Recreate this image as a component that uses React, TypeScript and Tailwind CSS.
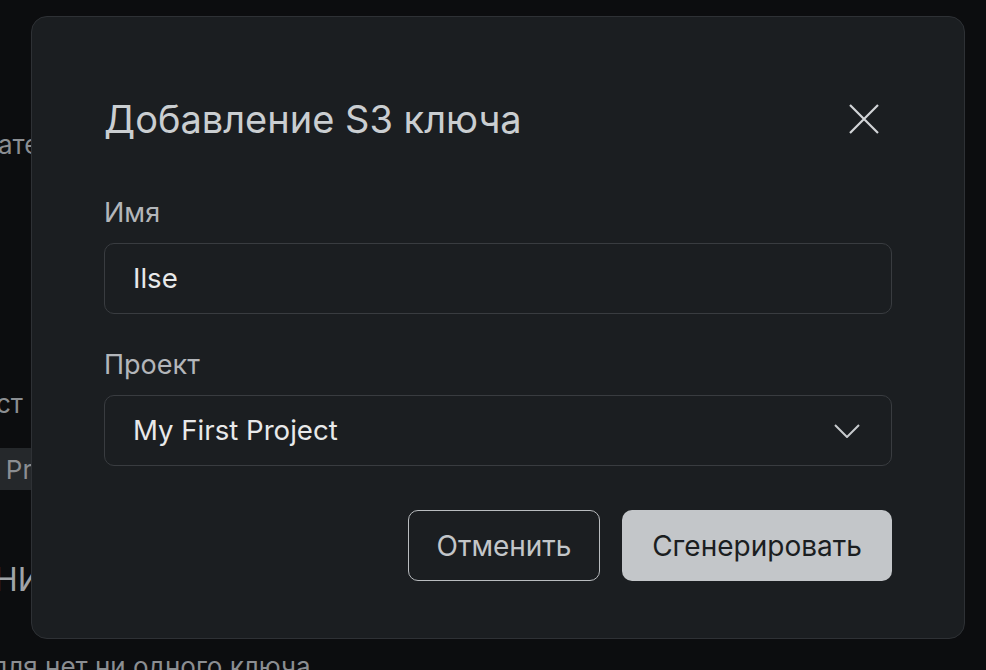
const FONT = { fontFamily: 'Inter, "Noto Sans", sans-serif' };

function Field({ label, children }: { label: string; children: React.ReactNode }) {
  return (
    <div className="flex flex-col">
      <span className="text-[27px] leading-[32px] text-[#b3b6ba]">{label}</span>
      <div className="mt-[14px] flex h-[71px] items-center justify-between rounded-[10px] border border-[#393c40] pl-[28px] pr-[31px] text-[27.6px] text-[#e8e9ea]">
        {children}
      </div>
    </div>
  );
}

export default function App() {
  return (
    <div className="relative h-[670px] w-[986px] overflow-hidden bg-[#0c0d0f]" style={FONT}>
      {/* page behind the dialog */}
      <div className="flex flex-col text-[26px] text-[#8b8e92]">
        <span className="ml-[-2px] mt-[128px] leading-[34px]">ател</span>
        <span className="ml-[-4px] mt-[225px] leading-[34px]">ст</span>
        <span className="mt-[27px] flex h-[42px] w-[60px] items-center bg-[#25282b]">
          <span className="ml-[-10px]">t Pr</span>
        </span>
        <span className="ml-[-6px] mt-[70px] text-[32px] leading-[40px] text-[#a0a3a7]">НИ</span>
        <span className="ml-[-8px] mt-[50px] whitespace-nowrap leading-[34px]">для нет ни одного ключа</span>
      </div>

      <div className="absolute left-[31px] top-[16px] flex h-[623px] w-[934px] flex-col rounded-[16px] border border-[#2e3135] bg-[#1b1e21] px-[72px] pt-[79px]">
        <div className="flex items-center justify-between">
          <h1 className="text-[38px] leading-[46px] text-[#caced1]">Добавление S3 ключа</h1>
          <svg className="mr-[13px] h-[30px] w-[30px] text-[#d2d5d8]" viewBox="0 0 30 30" fill="none" stroke="currentColor" strokeWidth="2.2">
            <path d="M1 1L29 29M29 1L1 29" />
          </svg>
        </div>

        <div className="mt-[55px] flex flex-col gap-[35px]">
          <Field label="Имя">
            <span>Ilse</span>
          </Field>
          <Field label="Проект">
            <span>My First Project</span>
            <svg className="h-[14px] w-[26px] text-[#c7cacd]" viewBox="0 0 26 14" fill="none" stroke="currentColor" strokeWidth="2">
              <path d="M1 1L13 13L25 1" />
            </svg>
          </Field>
        </div>

        <div className="mt-[44px] flex justify-end gap-[22px]">
          <button className="h-[71px] w-[192px] rounded-[10px] border border-[#b9bcbf] text-[28px] text-[#c3c6c9]">
            Отменить
          </button>
          <button className="h-[71px] w-[270px] rounded-[10px] bg-[#c3c6c9] text-[28px] text-[#1b1e21]">
            Сгенерировать
          </button>
        </div>
      </div>
    </div>
  );
}
